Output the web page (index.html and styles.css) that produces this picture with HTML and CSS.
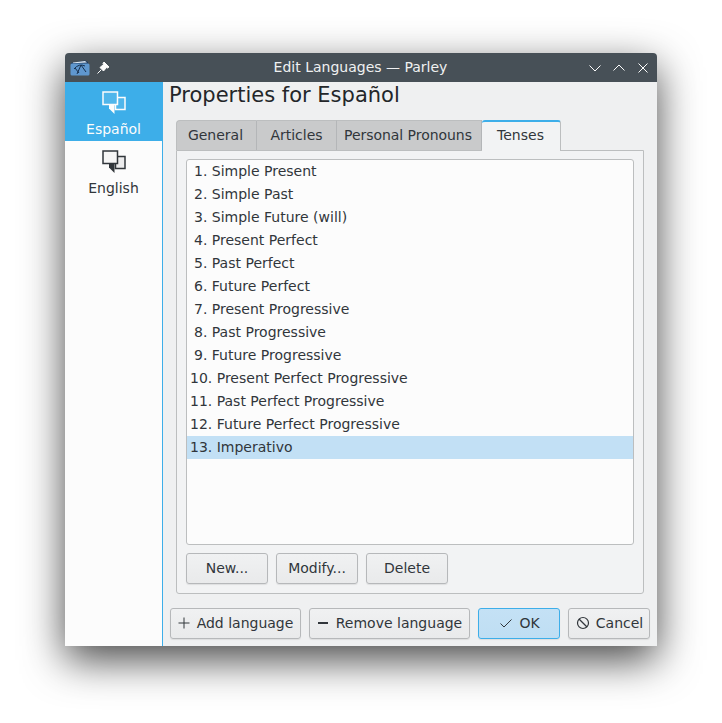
FILE: index.html
```html
<!DOCTYPE html>
<html lang="es">
<head>
  <meta charset="UTF-8" />
  <title>Edit Languages — Parley</title>
  <link rel="stylesheet" href="styles.css">
</head>
<body>
  <div class="window">

    <header class="titlebar">
      <div class="title-left">
        <svg class="app-icon" width="20" height="16" viewBox="0 0 20 16">
          <path d="M1 3 L15 0.5 L18 2 L18 4 L1 4z" fill="#1d3a63"/>
          <path d="M3 2.6 L15 1 L17 2.5 L3 3.2z" fill="#dfe9f3"/>
          <rect x="0.5" y="3.5" width="19" height="12" rx="1.5" fill="#5f97cf"/>
          <path d="M4 9 Q9 3 15 6 M7 14 L11 5 L16 12 M5 8 L9 13" fill="none" stroke="#17304f" stroke-width="1"/>
        </svg>
        <svg class="pin-icon" width="14" height="14" viewBox="0 0 14 14">
          <path d="M8 1 L13 6 L11.5 7 L10.5 6.5 L7.5 10 L4 6.5 L7.5 3.5 L7 2.5z M5 9 L1.5 12.5" fill="#fcfcfc" stroke="#fcfcfc" stroke-width="1"/>
        </svg>
      </div>
      <div class="title-text">Edit Languages — Parley</div>
      <div class="title-btns">
        <svg width="14" height="14" viewBox="0 0 14 14"><path d="M1.5 4.5 L7 10 L12.5 4.5" fill="none" stroke="#fcfcfc"/></svg>
        <svg width="14" height="14" viewBox="0 0 14 14"><path d="M1.5 9.5 L7 4 L12.5 9.5" fill="none" stroke="#fcfcfc"/></svg>
        <svg width="14" height="14" viewBox="0 0 14 14"><path d="M2.5 2.5 L11.5 11.5 M11.5 2.5 L2.5 11.5" fill="none" stroke="#fcfcfc"/></svg>
      </div>
    </header>

    <div class="content">
      <aside class="sidebar">
        <div class="lang lang-active">
          <svg width="24" height="24" viewBox="0 0 24 24">
            <path d="M15.5 6.5 H23 V18.5 H13.5 V13.5" fill="#fcfcfc" fill-opacity="0.1" stroke="#fcfcfc" stroke-width="1.5"/>
            <path d="M1 1 H15.5 V13.5 H1z" fill="#fcfcfc" fill-opacity="0.1" stroke="#fcfcfc" stroke-width="1.5"/>
            <path d="M7 14 H12.5 V23 L7 17.5z" fill="#fcfcfc"/>
          </svg>
          <span>Español</span>
        </div>
        <div class="lang">
          <svg width="24" height="24" viewBox="0 0 24 24">
            <path d="M15.5 6.5 H23 V18.5 H13.5 V13.5" fill="#ececed" stroke="#31363b" stroke-width="1.5"/>
            <path d="M1 1 H15.5 V13.5 H1z" fill="#f6f6f6" stroke="#31363b" stroke-width="1.5"/>
            <path d="M7 14 H12.5 V23 L7 17.5z" fill="#31363b"/>
          </svg>
          <span>English</span>
        </div>
      </aside>

      <main class="main">
        <h1 class="page-title">Properties for Español</h1>

        <div class="tabs">
          <div class="tab tab-general">General</div>
          <div class="tab tab-articles">Articles</div>
          <div class="tab tab-pronouns">Personal Pronouns</div>
          <div class="tab tab-active">Tenses</div>
        </div>

        <div class="pane">
          <ul class="tense-list">
            <li class="tense">1. Simple Present</li>
            <li class="tense">2. Simple Past</li>
            <li class="tense">3. Simple Future (will)</li>
            <li class="tense">4. Present Perfect</li>
            <li class="tense">5. Past Perfect</li>
            <li class="tense">6. Future Perfect</li>
            <li class="tense">7. Present Progressive</li>
            <li class="tense">8. Past Progressive</li>
            <li class="tense">9. Future Progressive</li>
            <li class="tense tense-wide">10. Present Perfect Progressive</li>
            <li class="tense tense-wide">11. Past Perfect Progressive</li>
            <li class="tense tense-wide">12. Future Perfect Progressive</li>
            <li class="tense tense-wide tense-selected">13. Imperativo</li>
          </ul>
          <div class="pane-btns">
            <button class="btn btn-small">New...</button>
            <button class="btn btn-small">Modify...</button>
            <button class="btn btn-small">Delete</button>
          </div>
        </div>

        <div class="dialog-btns">
          <button class="btn btn-add">
            <svg width="16" height="16" viewBox="0 0 16 16"><path d="M8 2.5 V13.5 M2.5 8 H13.5" stroke="#31363b" fill="none"/></svg>
            Add language
          </button>
          <button class="btn btn-remove">
            <svg width="16" height="16" viewBox="0 0 16 16"><path d="M3 8 H13" stroke="#31363b" stroke-width="2" fill="none"/></svg>
            Remove language
          </button>
          <button class="btn btn-ok">
            <svg width="16" height="16" viewBox="0 0 16 16"><path d="M2.5 8.5 L6 12 L13.5 4.5" stroke="#31363b" fill="none"/></svg>
            OK
          </button>
          <button class="btn btn-cancel">
            <svg width="16" height="16" viewBox="0 0 16 16"><circle cx="8" cy="8" r="5.5" stroke="#31363b" stroke-width="1.2" fill="none"/><path d="M4 4 L12 12" stroke="#31363b" stroke-width="1.2"/></svg>
            Cancel
          </button>
        </div>
      </main>
    </div>
  </div>
</body>
</html>
```
FILE: styles.css
```css
/* Reset */
* {
  margin: 0;
  padding: 0;
  box-sizing: border-box;
}

body {
  background: #fff;
  color: #31363b;
  font-family: "DejaVu Sans", sans-serif;
  font-size: 14px;
  padding: 53px 65px 77px;
  height: 723px;
  overflow: hidden;
}

/* Window with its drop shadow */
.window {
  width: 592px;
  height: 593px;
  background: #eff0f1;
  border-radius: 4px 4px 0 0;
  box-shadow: 0 14px 42px rgba(0,0,0,0.72);
  display: flex;
  flex-direction: column;
}

.titlebar {
  height: 29px;
  flex-shrink: 0;
  background: #475057;
  border-radius: 4px 4px 0 0;
  color: #eff0f1;
  display: flex;
  align-items: center;
  justify-content: space-between;
  padding: 0 7px 0 5px;
  font-size: 14px;
}
.title-left {
  display: flex;
  align-items: center;
  gap: 6px;
  width: 90px;
}
.title-text {
  flex: 1;
  text-align: center;
  padding: 0 0 2px 1px;
}
.title-btns {
  display: flex;
  align-items: center;
  justify-content: flex-end;
  gap: 10px;
  width: 90px;
}

.content {
  flex: 1;
  display: flex;
  min-height: 0;
}

/* Left column with the languages */
.sidebar {
  width: 98px;
  flex-shrink: 0;
  background: #fcfcfc;
  border-right: 1px solid #3daee9;
}
.lang {
  height: 59px;
  display: flex;
  flex-direction: column;
  align-items: center;
  padding-top: 9px;
  gap: 6px;
}
.lang svg {
  display: block;
}
.lang-active {
  background: #3daee9;
  color: #fcfcfc;
}

.main {
  flex: 1;
  padding: 0 7px 7px 6px;
  display: flex;
  flex-direction: column;
  min-width: 0;
}

.page-title {
  font-size: 21px;
  font-weight: normal;
  color: #232629;
  height: 38px;
  line-height: 27px;
}

/* Tabs */
.tabs {
  display: flex;
  margin-left: 7px;
  height: 30px;
}
.tab {
  background: #c9cacb;
  border-top: 1px solid #bcbebf;
  border-right: 1px solid #b4b6b8;
  text-align: center;
  line-height: 28px;
  height: 30px;
  flex-shrink: 0;
}
.tab-general {
  width: 81px;
  padding-right: 2px;
  border-left: 1px solid #bcbebf;
  border-radius: 4px 0 0 0;
}
.tab-articles {
  width: 80px;
}
.tab-pronouns {
  width: 145px;
  padding-right: 2px;
  white-space: nowrap;
  letter-spacing: -0.05px;
}
.tab-active {
  width: 79px;
  padding-right: 1px;
  background: #f2f3f4;
  border-top: 2px solid #3daee9;
  border-right: 1px solid #bcbebf;
  border-radius: 3px 3px 0 0;
  line-height: 26px;
  height: 31px;
  position: relative;
  z-index: 1;
}

.pane {
  margin-left: 7px;
  margin-right: 6px;
  height: 444px;
  background: #f2f3f4;
  border: 1px solid #bcbebf;
  border-radius: 0 0 3px 3px;
  padding: 8px 9px;
}

.tense-list {
  list-style: none;
  height: 386px;
  background: #fcfcfc;
  border: 1px solid #bcbebf;
  border-radius: 3px;
}
.tense {
  height: 23px;
  line-height: 23px;
  padding-left: 7px;
}
.tense-wide {
  padding-left: 3px;
}
.tense-selected {
  background: #c2e0f5;
}

.pane-btns {
  display: flex;
  gap: 8px;
  margin-top: 8px;
}

/* Buttons */
.btn {
  height: 31px;
  padding-bottom: 2px;
  font-family: inherit;
  font-size: 14px;
  color: #31363b;
  background: linear-gradient(#f0f1f2, #e9eaeb);
  border: 1px solid #b6b8ba;
  border-radius: 3px;
  box-shadow: 0 1px 1px rgba(0,0,0,0.08);
  display: flex;
  align-items: center;
  justify-content: center;
  gap: 5px;
}
.btn-small {
  width: 82px;
}

.dialog-btns {
  display: flex;
  gap: 8px;
  margin-top: 14px;
  margin-left: 1px;
}
.btn-add {
  width: 131px;
  padding-right: 2px;
}
.btn-remove {
  width: 161px;
  padding-right: 2px;
}
.btn-ok {
  width: 82px;
  background: linear-gradient(#c4e1f5, #bfdef3);
  border-color: #3daee9;
}
.btn-cancel {
  width: 82px;
}
```
